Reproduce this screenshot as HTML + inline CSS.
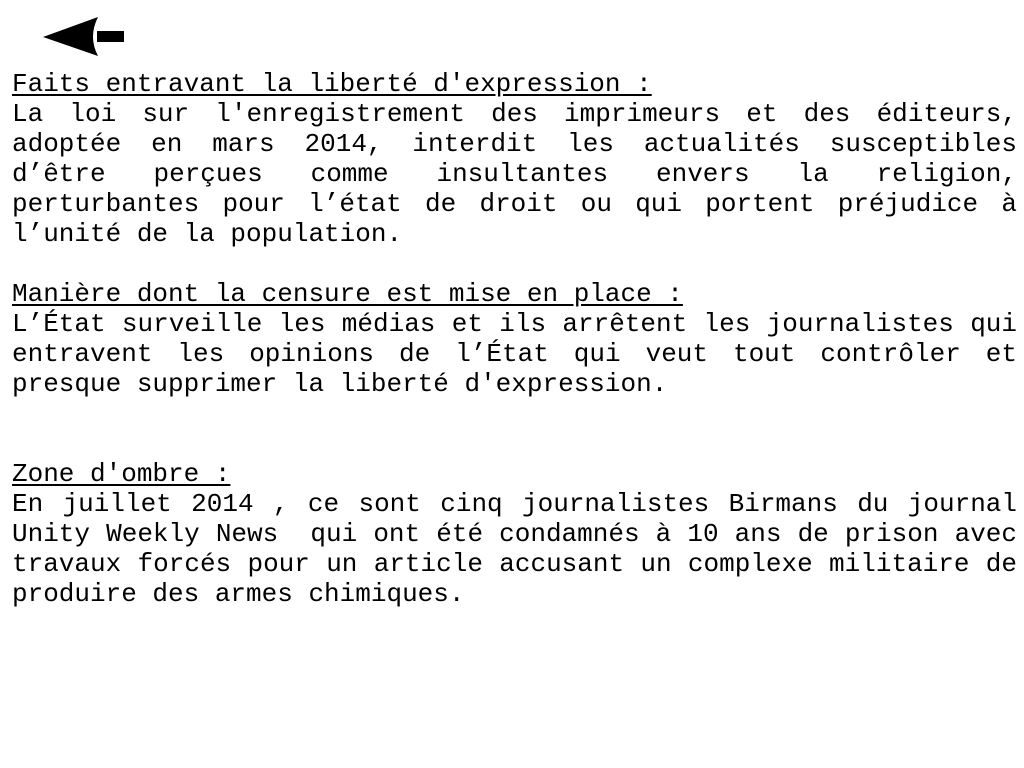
<!DOCTYPE html>
<html><head><meta charset="utf-8"><style>
html,body{margin:0;padding:0;background:#fff;width:1024px;height:768px;overflow:hidden}
.t{position:absolute;left:12px;top:69px;width:1005px;font-family:"Courier New","Nimbus Mono PS","Nimbus Mono L","FreeMono","Liberation Mono",monospace;font-size:26px;line-height:30px;color:#000}
p{margin:0;text-align:justify}
u{text-decoration:underline;text-underline-offset:3px}
</style></head><body>
<svg style="position:absolute;left:0;top:0" width="140" height="70">
<path d="M43 37 L98 17 Q88 37 98 56 Z" fill="#000"/>
<rect x="97" y="31" width="27" height="11" fill="#000"/>
</svg>
<div class="t">
<p><u>Faits entravant la liberté d'expression :</u></p>
<p>La loi sur l'enregistrement des imprimeurs et des éditeurs, adoptée en mars 2014, interdit les actualités susceptibles d’être perçues comme insultantes envers la religion, perturbantes pour l’état de droit ou qui portent préjudice à l’unité de la population.</p>
<p>&nbsp;</p>
<p><u>Manière dont la censure est mise en place :</u></p>
<p>L’État surveille les médias et ils arrêtent les journalistes qui entravent les opinions de l’État qui veut tout contrôler et presque supprimer la liberté d'expression.</p>
<p>&nbsp;</p>
<p>&nbsp;</p>
<p><u>Zone d'ombre :</u></p>
<p>En juillet 2014 , ce sont cinq journalistes Birmans du journal Unity Weekly News&nbsp; qui ont été condamnés à 10 ans de prison avec travaux forcés pour un article accusant un complexe militaire de produire des armes chimiques.</p>
</div>
</body></html>
